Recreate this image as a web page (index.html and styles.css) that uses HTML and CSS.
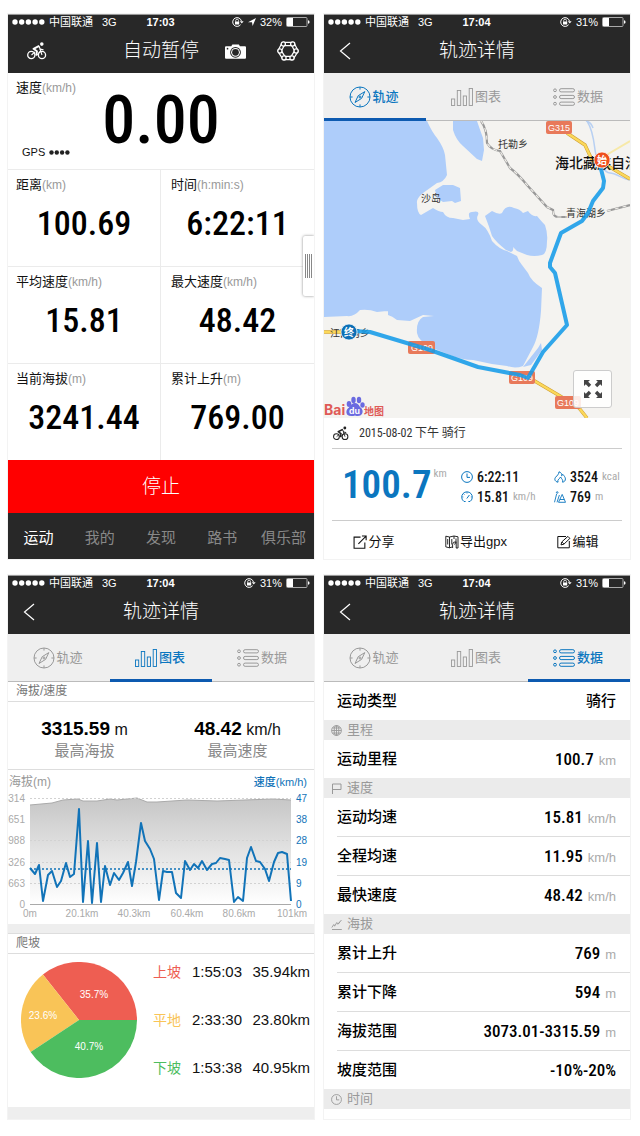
FILE: index.html
```html
<!DOCTYPE html>
<html lang="zh-CN">
<head>
<meta charset="utf-8">
<meta name="viewport" content="width=device-width, initial-scale=1">
<title>轨迹详情</title>
<link rel="stylesheet" href="styles.css">
</head>
<body>
<svg class="defs" aria-hidden="true">
  <symbol id="dots" viewBox="0 0 33 6"><g fill="currentColor"><circle cx="3" cy="3" r="2.7"/><circle cx="9.7" cy="3" r="2.7"/><circle cx="16.4" cy="3" r="2.7"/><circle cx="23.1" cy="3" r="2.7"/><circle cx="29.8" cy="3" r="2.7"/></g></symbol>
  <symbol id="lock" viewBox="0 0 12 10"><g fill="none" stroke="currentColor"><path d="M8.600 7.700A4.400 4.400 0 1 1 9.400 4"/><path d="M3.700 4.600V3.600a1.400 1.400 0 0 1 2.800 0v1" stroke-width=".8"/></g><rect x="3" y="4.500" width="4.200" height="3" fill="currentColor"/><path d="M7.800 4.200h3.800L9.800 6.600z" fill="currentColor"/></symbol>
  <symbol id="loc" viewBox="0 0 8 8"><path d="M0 4.2 8 0 4.6 8 4 4.3z" fill="currentColor"/></symbol>
  <symbol id="batt" viewBox="0 0 24 10"><rect x=".5" y=".5" width="20.5" height="9" rx="1" fill="none" stroke="#aaa"/><rect x="1" y="1" width="6" height="8" fill="#fff"/><path d="M22 3.2q1.6 0 1.6 1.8T22 6.8z" fill="#fff"/></symbol>
  <symbol id="back" viewBox="0 0 12 18"><path d="M11 1 1.5 9 11 17" fill="none" stroke="currentColor" stroke-width="1.2"/></symbol>
  <symbol id="bike" viewBox="0 0 20 18"><g fill="none" stroke="currentColor"><circle cx="4.300" cy="13" r="3.600" stroke-width="1.300"/><circle cx="15" cy="13" r="3.600" stroke-width="1.300"/><path d="M4.500 13 8 9.800M9.500 13.500l4-4.500M13 7l2 6" stroke-width="1.100"/><path d="M12.200 3.800 6.500 6.800l3.500 2.400-.8 4.300" stroke-width="1.900" stroke-linejoin="round"/><path d="m11.800 4 1.500 3.200 3.200.6" stroke-width="1.200"/></g><circle cx="14.800" cy="2.100" r="1.800" fill="currentColor"/></symbol>
  <symbol id="camera" viewBox="0 0 20 14"><path fill="currentColor" fill-rule="evenodd" d="M1 2h5l1-1.600h6.200L14.200 2H19a1 1 0 0 1 1 1v10a1 1 0 0 1-1 1H1a1 1 0 0 1-1-1V3a1 1 0 0 1 1-1zm9 .7a5.100 5.100 0 1 0 .01 0z"/><circle cx="10" cy="7.800" r="4.200" fill="currentColor"/><circle cx="10" cy="7.800" r="3.200" fill="#282828"/><circle cx="2.400" cy="4.300" r=".8" fill="#282828"/></symbol>
  <symbol id="chain" viewBox="0 0 22 20"><path d="M6.200 3h9.600l3.600 7-4.400 7H7L2.600 10z" fill="none" stroke="currentColor" stroke-width="4.400" stroke-linejoin="round"/><path d="M6.200 3h9.600l3.600 7-4.400 7H7L2.600 10z" fill="none" stroke="#282828" stroke-width="2" stroke-linejoin="round"/><g fill="#282828" stroke="currentColor" stroke-width="1.300"><circle cx="6.300" cy="3" r="2.100"/><circle cx="15.700" cy="3" r="2.100"/><circle cx="19.100" cy="10" r="2.100"/><circle cx="15" cy="16.900" r="2.100"/><circle cx="7" cy="16.900" r="2.100"/><circle cx="2.900" cy="10" r="2.100"/></g></symbol>
  <symbol id="compass" viewBox="0 0 22 22"><g fill="none" stroke="currentColor"><circle cx="11" cy="11" r="10"/><path d="M15.800 5.600 12.600 12.400 6 16.500 9.200 9.700z"/><circle cx="11" cy="11" r="1"/><path d="M11 1v2.600M11 18.400V21M1 11h2.600M18.400 11H21"/></g></symbol>
  <symbol id="bars" viewBox="0 0 22 18"><g fill="none" stroke="currentColor" stroke-width=".9"><rect x=".5" y="11" width="3.200" height="6.500"/><rect x="6.300" y="2.500" width="3.400" height="15"/><rect x="12.300" y="8" width="3.200" height="9.500"/><rect x="18.200" y=".5" width="3.300" height="17"/></g></symbol>
  <symbol id="list" viewBox="0 0 22 18"><g fill="none" stroke="currentColor"><circle cx="2" cy="2.300" r="1.400"/><circle cx="2" cy="9" r="1.400"/><circle cx="2" cy="15.700" r="1.400"/><rect x="6.500" y=".7" width="15" height="3.200" rx="1.600"/><rect x="6.500" y="7.400" width="15" height="3.200" rx="1.600"/><rect x="6.500" y="14.100" width="15" height="3.200" rx="1.600"/></g></symbol>
  <symbol id="clock" viewBox="0 0 12 12"><g fill="none" stroke="currentColor"><circle cx="6" cy="6" r="5.400"/><path d="M6 2.500V6.400h3"/></g></symbol>
  <symbol id="gauge" viewBox="0 0 12 12"><g fill="none" stroke="currentColor"><path d="M3 10.500a5.300 5.300 0 1 1 6 0H7.400M3 10.500h1.600M5.800 7.500l2.600-3.500"/><path d="M6 1v1.600M1 6h1.400M9.800 6H11M2.600 2.800l1 1" stroke-width=".7"/></g></symbol>
  <symbol id="flame" viewBox="0 0 12 12"><g fill="none" stroke="currentColor"><path d="M4 11.200C.5 10.500.2 7.800 1.800 6 3 4.800 5 3 5 .8c2.400.7 3 2.400 2.600 4 .8-.3 1-.9 1.100-1.500 1.300 1.300 2.700 3 2.700 4.600 0 2-1.200 3-2.800 3.300C9.400 9 7.600 8 6.600 6 6 7.600 3 8.400 4 11.200z"/></g></symbol>
  <symbol id="climb" viewBox="0 0 12 12"><g fill="none" stroke="currentColor" stroke-width=".9"><path d="M4.500 11.300 8.200 3.400l3.300 7.900zM.5 11.300 2.600 3M3 11.300 5.400 4"/><circle cx="3.200" cy="1.500" r=".8"/><path d="M6 8.500h4.200"/></g></symbol>
  <symbol id="share" viewBox="0 0 13 13"><path d="M7 2H1v10.300h10V7M5 8.200l6.700-6.800M8.300 1h3.900v3.800" fill="none" stroke="currentColor"/></symbol>
  <symbol id="gpx" viewBox="0 0 14 14"><path d="M.8 1.200 4.500 2v10.800L.8 11.900zM4.500 2 9 1v3M9 1l4 .8v11.200h-2M4.500 12.800 7.200 12M2.700 4v5.500M6.800 4v5.500M11 3.500v2.800M7.600 13V9.300q0-2.600 3.600-2.600V13M9.600 9.600l1.600-2.900" fill="none" stroke="currentColor" stroke-width=".9"/></symbol>
  <symbol id="edit" viewBox="0 0 14 13"><path d="M9 1H.8v11.300h11.500V5.500M4 9.400l.8-3L10.900.9l2 2L7 8.600z" fill="none" stroke="currentColor"/><path d="M5 6.500 7 8.500" stroke="currentColor" stroke-width=".8"/></symbol>
  <symbol id="globe" viewBox="0 0 11 11"><g fill="none" stroke="currentColor" stroke-width=".9"><circle cx="5.500" cy="5.500" r="4.900"/><ellipse cx="5.500" cy="5.500" rx="2.300" ry="4.900"/><path d="M.6 5.500h9.800M5.500.6v9.800M1.300 3h8.400M1.300 8h8.400"/></g></symbol>
  <symbol id="flag" viewBox="0 0 11 11"><path d="M1.500 11V1H10v5.500H1.500" fill="none" stroke="currentColor"/></symbol>
  <symbol id="trend" viewBox="0 0 11 11"><path d="M1 10.500h9.800M.8 8.500l2-3 .8 1.700L5.800 3.500l.9 1.700L10.500 1M7.200 5.200l2-2.600" fill="none" stroke="currentColor" stroke-width=".9"/></symbol>
  <symbol id="expand" viewBox="0 0 18 18"><path id="ex" fill="currentColor" d="M0 0h6L4.200 1.800 7.200 4.800 4.800 7.200 1.800 4.200 0 6z"/><use href="#ex" transform="matrix(-1 0 0 1 18 0)"/><use href="#ex" transform="matrix(1 0 0 -1 0 18)"/><use href="#ex" transform="matrix(-1 0 0 -1 18 18)"/></symbol>
</svg>

<main class="board">

<section class="phone">
  <header class="top">
    <div class="status">
      <span class="status-side"><svg class="dots"><use href="#dots"/></svg><span>中国联通</span><span class="net">3G</span></span>
      <b>17:03</b>
      <span class="status-side end"><svg class="lock"><use href="#lock"/></svg><svg class="loc"><use href="#loc"/></svg><span>32%</span><svg class="batt"><use href="#batt"/></svg></span>
    </div>
    <div class="nav">
      <div class="nav-side"><button class="icon-btn" aria-label="骑行"><svg class="i-bike"><use href="#bike"/></svg></button></div>
      <h1>自动暂停</h1>
      <div class="nav-side end"><button class="icon-btn" aria-label="拍照"><svg class="i-camera"><use href="#camera"/></svg></button><button class="icon-btn" aria-label="设置"><svg class="i-chain"><use href="#chain"/></svg></button></div>
    </div>
  </header>
  <div class="speed">
    <div class="metric-label">速度<small>(km/h)</small></div>
    <div class="speed-value">0.00</div>
    <div class="gps">GPS <svg class="gps-dots" viewBox="0 0 22 5"><g fill="#222"><circle cx="2.500" cy="2.500" r="2.200"/><circle cx="7.800" cy="2.500" r="2.200"/><circle cx="13.100" cy="2.500" r="2.200"/><circle cx="18.400" cy="2.500" r="2.200"/></g></svg></div>
  </div>
  <div class="metrics">
    <div class="metric"><div class="metric-label">距离<small>(km)</small></div><div class="metric-value">100.69</div></div>
    <div class="metric"><div class="metric-label">时间<small>(h:min:s)</small></div><div class="metric-value">6:22:11</div></div>
    <div class="metric"><div class="metric-label">平均速度<small>(km/h)</small></div><div class="metric-value">15.81</div></div>
    <div class="metric"><div class="metric-label">最大速度<small>(km/h)</small></div><div class="metric-value">48.42</div></div>
    <div class="metric"><div class="metric-label">当前海拔<small>(m)</small></div><div class="metric-value">3241.44</div></div>
    <div class="metric"><div class="metric-label">累计上升<small>(m)</small></div><div class="metric-value">769.00</div></div>
    <button class="drawer" aria-label="展开"><i></i><i></i><i></i><i></i></button>
  </div>
  <button class="stop">停止</button>
  <nav class="bottom"><a class="on" href="#sport">运动</a><a href="#me">我的</a><a href="#find">发现</a><a href="#routes">路书</a><a href="#club">俱乐部</a></nav>
</section>

<section class="phone">
  <header class="top">
    <div class="status">
      <span class="status-side"><svg class="dots"><use href="#dots"/></svg><span>中国联通</span><span class="net">3G</span></span>
      <b>17:04</b>
      <span class="status-side end"><svg class="lock"><use href="#lock"/></svg><span>31%</span><svg class="batt"><use href="#batt"/></svg></span>
    </div>
    <div class="nav"><div class="nav-side"><button class="icon-btn" aria-label="返回"><svg class="i-back"><use href="#back"/></svg></button></div><h1>轨迹详情</h1></div>
  </header>
  <nav class="tabs"><a class="on" href="#track"><svg class="i-compass"><use href="#compass"/></svg>轨迹</a><a href="#chart"><svg class="i-tab"><use href="#bars"/></svg>图表</a><a href="#data"><svg class="i-tab"><use href="#list"/></svg>数据</a></nav>
  <div class="map">
    <svg class="map-art" viewBox="0 0 306 297" preserveAspectRatio="xMidYMid slice" role="img" aria-label="地图">
      <rect width="306" height="297" fill="#f4f3f0"/>
      <g fill="#aecdfa">
        <path d="M0 0H103Q108 11 113 17Q120 27 121 34L123 54Q120 61 113 62L99 72Q92 78 93 82Q93 92 97 94L109 87Q115 91 119 91Q122 97 129 97L139 99L146 98Q143 91 148 91Q156 89 154 94Q151 99 158 104Q164 108 168 120Q175 128 183 130L193 135Q195 141 198 144L204 152Q207 160 218 167L217 190Q215 215 209 226L199 245Q191 248 183 245Q165 243 149 239Q138 239 126 234L106 226Q94 219 93 212Q92 200 99 196L110 195L99 194L86 200L73 199Q68 195 64 194L64 190H68Q60 190 53 191Q45 188 36 189Q30 196 23 195L0 196Z"/>
        <path d="M129 0V9Q132 19 139 25L153 38L158 40L160 29L159 17Q155 6 153 0Z"/>
        <path d="M111 69 119 64H129L136 67 137 80 131 82 128 80 119 81 113 77Z"/>
        <path d="M161 95Q165 92 168 90Q175 94 178 92Q182 83 190 87Q196 88 199 92L204 90Q208 96 213 95Q218 101 221 104Q224 113 223 120Q223 133 218 134Q210 136 203 134L193 130L189 126Q190 130 187 131L182 129Q172 121 168 115Q165 105 161 95Z"/>
        <path d="M199 246 214 227 217 222 218 229 213 236 207 244Z"/>
      </g>
      <path d="M263 0C269 9 270 21 271 29S280 52 286 52 298 58 306 59M262 0q5 1 7 7" fill="none" stroke="#b8d0f2" stroke-width="1.500"/>
      <path d="M279 36 306 20" fill="none" stroke="#f7e9a8" stroke-width="2"/>
      <path d="M157 0Q163 8 163 22Q167 29 176 30L186 47Q194 53 203 64L223 86L229 89Q229 96 234 96L243 96M283 90 306 84" fill="none" stroke="#999" stroke-width="2.200"/>
      <path d="M157 0Q163 8 163 22Q167 29 176 30L186 47Q194 53 203 64L223 86L229 89Q229 96 234 96L243 96M283 90 306 84" fill="none" stroke="#f1efea" stroke-width="1.100" stroke-dasharray="4 4"/>
      <g fill="none" stroke="#cf9e33" stroke-width="3.400"><path d="M243 12 261 24 268 39 284 45 306 58M0 211H18M209 259 236 275 255 287 263 297"/></g>
      <g fill="none" stroke="#fbd85a" stroke-width="2.400"><path d="M243 12 261 24 268 39 284 45 306 58M0 211H18M209 259 236 275 255 287 263 297"/></g>
      <g fill="#e8795a"><rect x="222" y="0" width="26" height="13" rx="2"/><rect x="84" y="220" width="27" height="13" rx="2"/><rect x="185" y="250" width="26" height="13" rx="2"/><rect x="231" y="275" width="26" height="13" rx="2"/></g>
      <g class="shield"><text x="235" y="10">G315</text><text x="98" y="230">G109</text><text x="198" y="260">G109</text><text x="244" y="285">G109</text></g>
      <g class="place"><text x="174" y="27">托勒乡</text><text x="97" y="81">沙岛</text><text x="242" y="96">青海湖乡</text><text x="6" y="216">江西沟乡</text></g>
      <text class="city" x="231" y="47">海北藏族自治州</text>
      <path d="M276 44 280 60 279 67 269 80 264 92 258 100 237 112 226 142 226 146 231 152 243 204 219 231 204 257 196 254 154 246 106 229 46 211 30 210" fill="none" stroke="#159be8" stroke-width="4" stroke-opacity=".88" stroke-linejoin="round"/>
      <g stroke="#fff" stroke-opacity=".7"><circle cx="278" cy="39" r="8" fill="#ee4f1c"/><circle cx="25" cy="211" r="8" fill="#0c6fb5"/></g>
      <g class="pin"><text x="278" y="43">始</text><text x="25" y="215">终</text></g>
      <g fill="#6a6ae0"><ellipse cx="25" cy="283" rx="2.300" ry="3"/><ellipse cx="29.500" cy="279" rx="2.200" ry="3.200"/><ellipse cx="35" cy="279" rx="2.200" ry="3.200"/><ellipse cx="38.500" cy="284" rx="2.200" ry="2.800"/><path d="M31 282q3 0 5 4 4 3 2 7-2 3-7 1.500-5 1.500-8-1-2-4 2-7 2.500-4.500 6-4.500z"/></g>
      <text class="logo" x="0" y="294">Bai</text><text class="logo-du" x="25" y="293">du</text><text class="logo-cn" x="40" y="294">地图</text>
    </svg>
    <button class="expand" aria-label="全屏"><svg class="i-expand"><use href="#expand"/></svg></button>
  </div>
  <div class="summary">
    <div class="ride"><svg class="i-bike-s"><use href="#bike"/></svg><span>2015-08-02 下午 骑行</span></div>
    <div class="totals">
      <div class="distance">100.7<sup>km</sup></div>
      <div class="total-col">
        <div><svg class="i-12"><use href="#clock"/></svg><b>6:22:11</b></div>
        <div><svg class="i-12"><use href="#gauge"/></svg><b>15.81</b><small>km/h</small></div>
      </div>
      <div class="total-col">
        <div><svg class="i-12"><use href="#flame"/></svg><b>3524</b><small>kcal</small></div>
        <div><svg class="i-12"><use href="#climb"/></svg><b>769</b><small>m</small></div>
      </div>
    </div>
  </div>
  <div class="actions"><button><svg class="i-14"><use href="#share"/></svg>分享</button><button><svg class="i-14"><use href="#gpx"/></svg>导出gpx</button><button><svg class="i-14"><use href="#edit"/></svg>编辑</button></div>
</section>

<section class="phone">
  <header class="top">
    <div class="status">
      <span class="status-side"><svg class="dots"><use href="#dots"/></svg><span>中国联通</span><span class="net">3G</span></span>
      <b>17:04</b>
      <span class="status-side end"><svg class="lock"><use href="#lock"/></svg><span>31%</span><svg class="batt"><use href="#batt"/></svg></span>
    </div>
    <div class="nav"><div class="nav-side"><button class="icon-btn" aria-label="返回"><svg class="i-back"><use href="#back"/></svg></button></div><h1>轨迹详情</h1></div>
  </header>
  <nav class="tabs"><a href="#track"><svg class="i-compass"><use href="#compass"/></svg>轨迹</a><a class="on" href="#chart"><svg class="i-tab"><use href="#bars"/></svg>图表</a><a href="#data"><svg class="i-tab"><use href="#list"/></svg>数据</a></nav>
  <h2 class="caption">海拔/速度</h2>
  <div class="peaks">
    <div><p><b>3315.59</b> m</p><span>最高海拔</span></div>
    <div><p><b>48.42</b> km/h</p><span>最高速度</span></div>
  </div>
  <svg class="chart" viewBox="0 0 306 154" role="img" aria-label="海拔与速度曲线">
    <defs><linearGradient id="alt" x1="0" y1="0" x2="0" y2="1"><stop offset="0" stop-color="#c6c6c6"/><stop offset="1" stop-color="#fff"/></linearGradient></defs>
    <path d="M22 134V35L44 33 55 30 70 29 75 31 89 31 102 29 109 30 129 28 139 32 149 32 179 30 209 31 265 29 283 30V134Z" fill="url(#alt)"/>
    <path d="M22 35 44 33 55 30 70 29 75 31 89 31 102 29 109 30 129 28 139 32 149 32 179 30 209 31 265 29 283 30" fill="none" stroke="#aaa"/>
    <path d="M22 28.500H283M22 49.500H283M22 70.500H283M22 92.500H283M22 113.500H283" fill="none" stroke="#d2d2d2" stroke-dasharray="2 2"/>
    <path d="M22 134.500H283" stroke="#aaa"/>
    <path d="M22 99H283" stroke="#1173b8" stroke-width="1.500" stroke-dasharray="2 2"/>
    <path d="M22 98 27 104 31 95 35 131 40 105 44 101 49 117 53 111 58 93 62 107 66 104 71 39 75 132 80 71 84 133 89 73 93 132 97 96 102 115 106 103 111 110 115 103 120 92 124 116 128 92 133 53 137 71 142 79 146 89 151 130 155 101 159 102 164 102 168 123 173 128 177 91 182 100 186 94 190 98 194 91 199 100 204 94 208 93 212 88 217 89 221 90 226 132 230 127 235 131 239 88 243 77 248 91 252 92 257 99 261 111 266 92 270 83 274 82 279 84 283 131" fill="none" stroke="#1173b8" stroke-width="2" stroke-linejoin="round"/>
    <text class="ax-title" x="1" y="16">海拔(m)</text><text class="ax-title blue right" x="299" y="16">速度(km/h)</text>
    <g class="axis right"><text x="17" y="32">3314</text><text x="17" y="53">2651</text><text x="17" y="74">1988</text><text x="17" y="96">1326</text><text x="17" y="117">663</text><text x="17" y="138">0</text></g>
    <g class="axis blue"><text x="288" y="32">47</text><text x="288" y="53">38</text><text x="288" y="74">28</text><text x="288" y="96">19</text><text x="288" y="117">9</text><text x="288" y="138">0</text></g>
    <g class="axis mid"><text x="22" y="147">0m</text><text x="74" y="147">20.1km</text><text x="126" y="147">40.3km</text><text x="179" y="147">60.4km</text><text x="231" y="147">80.6km</text><text x="284" y="147">101km</text></g>
  </svg>
  <div class="band"></div>
  <h2 class="caption">爬坡</h2>
  <div class="slope">
    <svg class="pie" viewBox="0 0 116 116" role="img" aria-label="爬坡占比">
      <path d="M58 58H116A58 58 0 0 0 21.900 12.600Z" fill="#ee5e52"/>
      <path d="M58 58 21.900 12.600A58 58 0 0 0 9.600 90Z" fill="#f9c457"/>
      <path d="M58 58 9.600 90A58 58 0 0 0 116 58Z" fill="#4dbd5f"/>
      <text x="73" y="36">35.7%</text><text x="22" y="57">23.6%</text><text x="68" y="88">40.7%</text>
    </svg>
    <table>
      <tr class="up"><th scope="row">上坡</th><td>1:55:03</td><td>35.94km</td></tr>
      <tr class="flat"><th scope="row">平地</th><td>2:33:30</td><td>23.80km</td></tr>
      <tr class="down"><th scope="row">下坡</th><td>1:53:38</td><td>40.95km</td></tr>
    </table>
  </div>
  <div class="band last"></div>
</section>

<section class="phone">
  <header class="top">
    <div class="status">
      <span class="status-side"><svg class="dots"><use href="#dots"/></svg><span>中国联通</span><span class="net">3G</span></span>
      <b>17:04</b>
      <span class="status-side end"><svg class="lock"><use href="#lock"/></svg><span>31%</span><svg class="batt"><use href="#batt"/></svg></span>
    </div>
    <div class="nav"><div class="nav-side"><button class="icon-btn" aria-label="返回"><svg class="i-back"><use href="#back"/></svg></button></div><h1>轨迹详情</h1></div>
  </header>
  <nav class="tabs"><a href="#track"><svg class="i-compass"><use href="#compass"/></svg>轨迹</a><a href="#chart"><svg class="i-tab"><use href="#bars"/></svg>图表</a><a class="on" href="#data"><svg class="i-tab"><use href="#list"/></svg>数据</a></nav>
  <dl class="rows"><div><dt>运动类型</dt><dd class="cn">骑行</dd></div></dl>
  <h2 class="group"><svg class="i-11"><use href="#globe"/></svg>里程</h2>
  <dl class="rows"><div><dt>运动里程</dt><dd>100.7<small>km</small></dd></div></dl>
  <h2 class="group"><svg class="i-11"><use href="#flag"/></svg>速度</h2>
  <dl class="rows">
    <div><dt>运动均速</dt><dd>15.81<small>km/h</small></dd></div>
    <div><dt>全程均速</dt><dd>11.95<small>km/h</small></dd></div>
    <div><dt>最快速度</dt><dd>48.42<small>km/h</small></dd></div>
  </dl>
  <h2 class="group"><svg class="i-11"><use href="#trend"/></svg>海拔</h2>
  <dl class="rows">
    <div><dt>累计上升</dt><dd>769<small>m</small></dd></div>
    <div><dt>累计下降</dt><dd>594<small>m</small></dd></div>
    <div><dt>海拔范围</dt><dd>3073.01-3315.59<small>m</small></dd></div>
    <div><dt>坡度范围</dt><dd>-10%-20%</dd></div>
  </dl>
  <h2 class="group"><svg class="i-11"><use href="#clock"/></svg>时间</h2>
</section>

</main>
</body>
</html>
```
FILE: styles.css
```css
:root {
  --blue: #0b76bf;
  --dark: #282828;
  --sans: "Liberation Sans", "Noto Sans CJK SC", sans-serif;
  --narrow: "Liberation Sans Narrow", "Roboto Condensed", Roboto, "Noto Sans CJK SC", sans-serif;
}
* { box-sizing: border-box; }
body, h1, h2, p, dl, dd { margin: 0; }
body { background: #fff; color: #111; font: 13px/18px var(--sans); }
button { border: 0; padding: 0; background: none; color: inherit; font: inherit; cursor: pointer; }
a { color: inherit; text-decoration: none; }
svg { display: block; flex: none; }
.defs { position: absolute; width: 0; height: 0; }

.board { display: grid; grid-template-columns: 1fr 1fr; gap: 16px 10px; padding: 14px 10px 17px 8px; }
.phone { display: flex; flex-direction: column; min-width: 0; overflow: hidden; background: #fff; box-shadow: 0 0 0 1px #f3f3f3; }

/* header */
.top { background: var(--dark); color: #fff; border-top: 1px solid #999; }
.status { display: grid; grid-template-columns: 1fr auto 1fr; align-items: center; padding: 0 4px; font-size: 11px; line-height: 14px; }
.status > b { padding-right: 1px; }
.status-side { display: flex; align-items: center; gap: 4px; }
.end { justify-content: flex-end; }
.net { margin-left: 5px; }
.dots { width: 33px; height: 6px; }
.lock { width: 12px; height: 10px; }
.loc { width: 8px; height: 8px; }
.batt { width: 24px; height: 10px; }
.nav { display: grid; grid-template-columns: 1fr auto 1fr; align-items: center; min-height: 44px; padding: 0 15px; }
.nav-side { display: flex; align-items: center; gap: 31px; }
.nav h1 { font-size: 19px; line-height: 26px; font-weight: 300; }
.icon-btn { display: flex; }
.i-bike { width: 20px; height: 18px; margin-left: 4px; }
.i-camera { width: 21px; height: 15px; }
.i-chain { width: 22px; height: 20px; }
.i-back { width: 12px; height: 18px; }

/* tabs */
.tabs { display: grid; grid-template-columns: repeat(3, 1fr); background: #efefef; color: #999; }
.tabs a { display: flex; align-items: center; justify-content: center; min-height: 48px; padding-right: 2px; box-shadow: inset 0 -1px #bbb; }
.tabs .on { color: var(--blue); box-shadow: inset 0 -3px #0d5ab0; font-weight: 500; }
.i-compass { width: 22px; height: 22px; margin-right: 1px; }
.i-tab { width: 22px; height: 18px; margin-right: 2px; }

/* live ride */
.speed { display: grid; grid-template-columns: 1fr auto 1fr; grid-template-rows: 1fr auto; padding: 6px 8px 8px; min-height: 96px; }
.metric-label { font-size: 13px; line-height: 18px; white-space: nowrap; }
.metric-label small { color: #999; font-size: 12px; }
.speed-value { grid-column: 2; grid-row: 1 / 3; align-self: center; padding-top: 2px; font: 500 66px/72px var(--narrow); color: #000; }
.gps { display: flex; align-items: center; gap: 4px; grid-row: 2; padding-left: 6px; font-size: 11px; }
.gps-dots { width: 22px; height: 5px; }
.metrics { position: relative; display: grid; grid-template-columns: 1fr 1fr; }
.metric { min-height: 97px; padding: 6px 8px; border-top: 1px solid #ebebeb; }
.metric:nth-child(odd) { border-right: 1px solid #ebebeb; }
.metric:nth-child(even) .metric-label { padding-left: 2px; }
.metric-value { margin-top: 8px; text-align: center; font: 500 34px/42px var(--narrow); color: #000; }
.drawer { position: absolute; top: 67px; right: 0; display: flex; align-items: center; justify-content: center; gap: 1px; width: 11px; height: 60px; background: #fff; border-radius: 2px 0 0 2px; box-shadow: 0 0 3px #888; }
.drawer i { width: 1px; height: 24px; background: #888; }
.stop { min-height: 53px; background: #f00; color: #fff; font-size: 19px; font-weight: 300; }
.bottom { display: grid; grid-template-columns: repeat(5, 1fr); align-items: center; min-height: 46px; padding-top: 4px; background: var(--dark); color: #888; font-size: 15px; text-align: center; }
.bottom .on { color: #fff; }

/* map */
.map { position: relative; }
.map-art { width: 100%; height: auto; }
.map-art text { font-family: var(--sans); }
.shield text, .pin text { fill: #fff; text-anchor: middle; }
.shield text { font-size: 9px; }
.pin text { font-size: 10px; font-weight: bold; }
.place text { font-size: 10px; fill: #333; }
.city { font-size: 14px; font-weight: 500; fill: #111; }
.map-art .logo { font: bold 14px Inter, var(--sans); fill: #df5a57; }
.logo-du { font-size: 9px; font-weight: bold; fill: #fff; }
.logo-cn { font-size: 10px; font-weight: bold; fill: #df5a57; }
.expand { position: absolute; right: 18px; bottom: 10px; display: grid; place-items: center; width: 39px; height: 38px; background: rgba(255, 255, 255, .85); border: 1px solid #ccc; border-radius: 3px; color: #444; }
.i-expand { width: 18px; height: 18px; }

/* ride summary */
.summary { padding: 0 8px; }
.ride { display: flex; align-items: center; gap: 10px; min-height: 31px; padding-left: 1px; border-bottom: 1px solid #ccc; color: #333; font: 12px/16px var(--narrow); }
.i-bike-s { width: 16px; height: 15px; color: #222; }
.totals { display: grid; grid-template-columns: 119px 93px 1fr; align-items: center; min-height: 72px; padding-left: 10px; border-bottom: 1px solid #ccc; }
.distance { display: flex; color: var(--blue); font: 600 39px/46px var(--narrow); }
.distance sup { margin-left: 2px; color: #aaa; font: 11px/24px var(--narrow); }
.total-col { display: grid; gap: 4px; padding-top: 4px; font-family: var(--narrow); line-height: 16px; }
.total-col div { display: flex; align-items: center; gap: 4px; }
.total-col svg { color: var(--blue); }
.total-col b { font-size: 14px; font-weight: 500; }
.total-col small { font-size: 11px; color: #aaa; }
.i-12 { width: 12px; height: 12px; }
.actions { display: grid; grid-template-columns: repeat(3, 1fr); flex: 1; min-height: 37px; }
.actions button { display: flex; align-items: center; justify-content: center; gap: 1px; padding: 4px 2px 0 0; font-size: 13px; }
.i-14 { width: 14px; height: 14px; }

/* charts */
.caption { padding: 0 8px; border-bottom: 1px solid #ddd; color: #777; font-size: 12px; line-height: 19px; font-weight: 400; }
.peaks { display: grid; grid-template-columns: 1fr 1fr; min-height: 68px; padding-top: 16px; border-bottom: 1px solid #ddd; text-align: center; }
.peaks p { font-size: 16px; line-height: 22px; }
.peaks b { font-size: 19px; color: #000; }
.peaks span { color: #888; font-size: 15px; line-height: 20px; }
.chart { width: 100%; height: auto; overflow: hidden; font-family: var(--sans); }
.axis { font-size: 10px; fill: #aaa; }
.ax-title { font-size: 12px; fill: #999; }
.chart .blue { fill: #1173b8; font-weight: 500; }
.chart .ax-title.blue { font-size: 11px; }
.chart .right { text-anchor: end; }
.chart .mid { text-anchor: middle; }
.band { min-height: 10px; background: #eee; border-bottom: 1px solid #ddd; }
.slope { display: flex; align-items: flex-start; gap: 16px; padding: 8px 4px 0 13px; min-height: 153px; }
.pie { width: 116px; height: 116px; }
.pie text { fill: #fff; font: 10px var(--sans); text-anchor: middle; }
.slope table { flex: 1; margin-top: -14px; border-collapse: collapse; font-size: 15px; }
.slope td, .slope th { height: 48px; padding: 0; font-weight: 400; text-align: left; white-space: nowrap; }
.slope td:last-child { text-align: right; }
.slope th { width: 39px; font-size: 14px; }
.up th { color: #ee5e52; }
.flat th { color: #f9c457; }
.down th { color: #4dbd5f; }
.last { min-height: 12px; border-bottom: 0; }

/* data list */
.rows { padding-left: 13px; }
.rows div { display: flex; align-items: center; justify-content: space-between; min-height: 39px; padding: 0 14px 0 0; border-bottom: 1px solid #ddd; }
.rows div:last-child { min-height: 38px; border-bottom: 0; }
.rows dt { font-size: 15px; font-weight: 500; color: #000; }
.rows dd { display: flex; align-items: baseline; gap: 5px; font: 500 17px/20px var(--narrow); color: #000; }
.rows small { color: #aaa; font: 13px var(--sans); }
.rows .cn { font: 500 15px/20px var(--sans); }
.group { display: flex; align-items: center; gap: 5px; min-height: 20px; padding-left: 7px; background: #ebebeb; color: #999; font-size: 13px; font-weight: 400; }
.i-11 { width: 11px; height: 11px; }
```
